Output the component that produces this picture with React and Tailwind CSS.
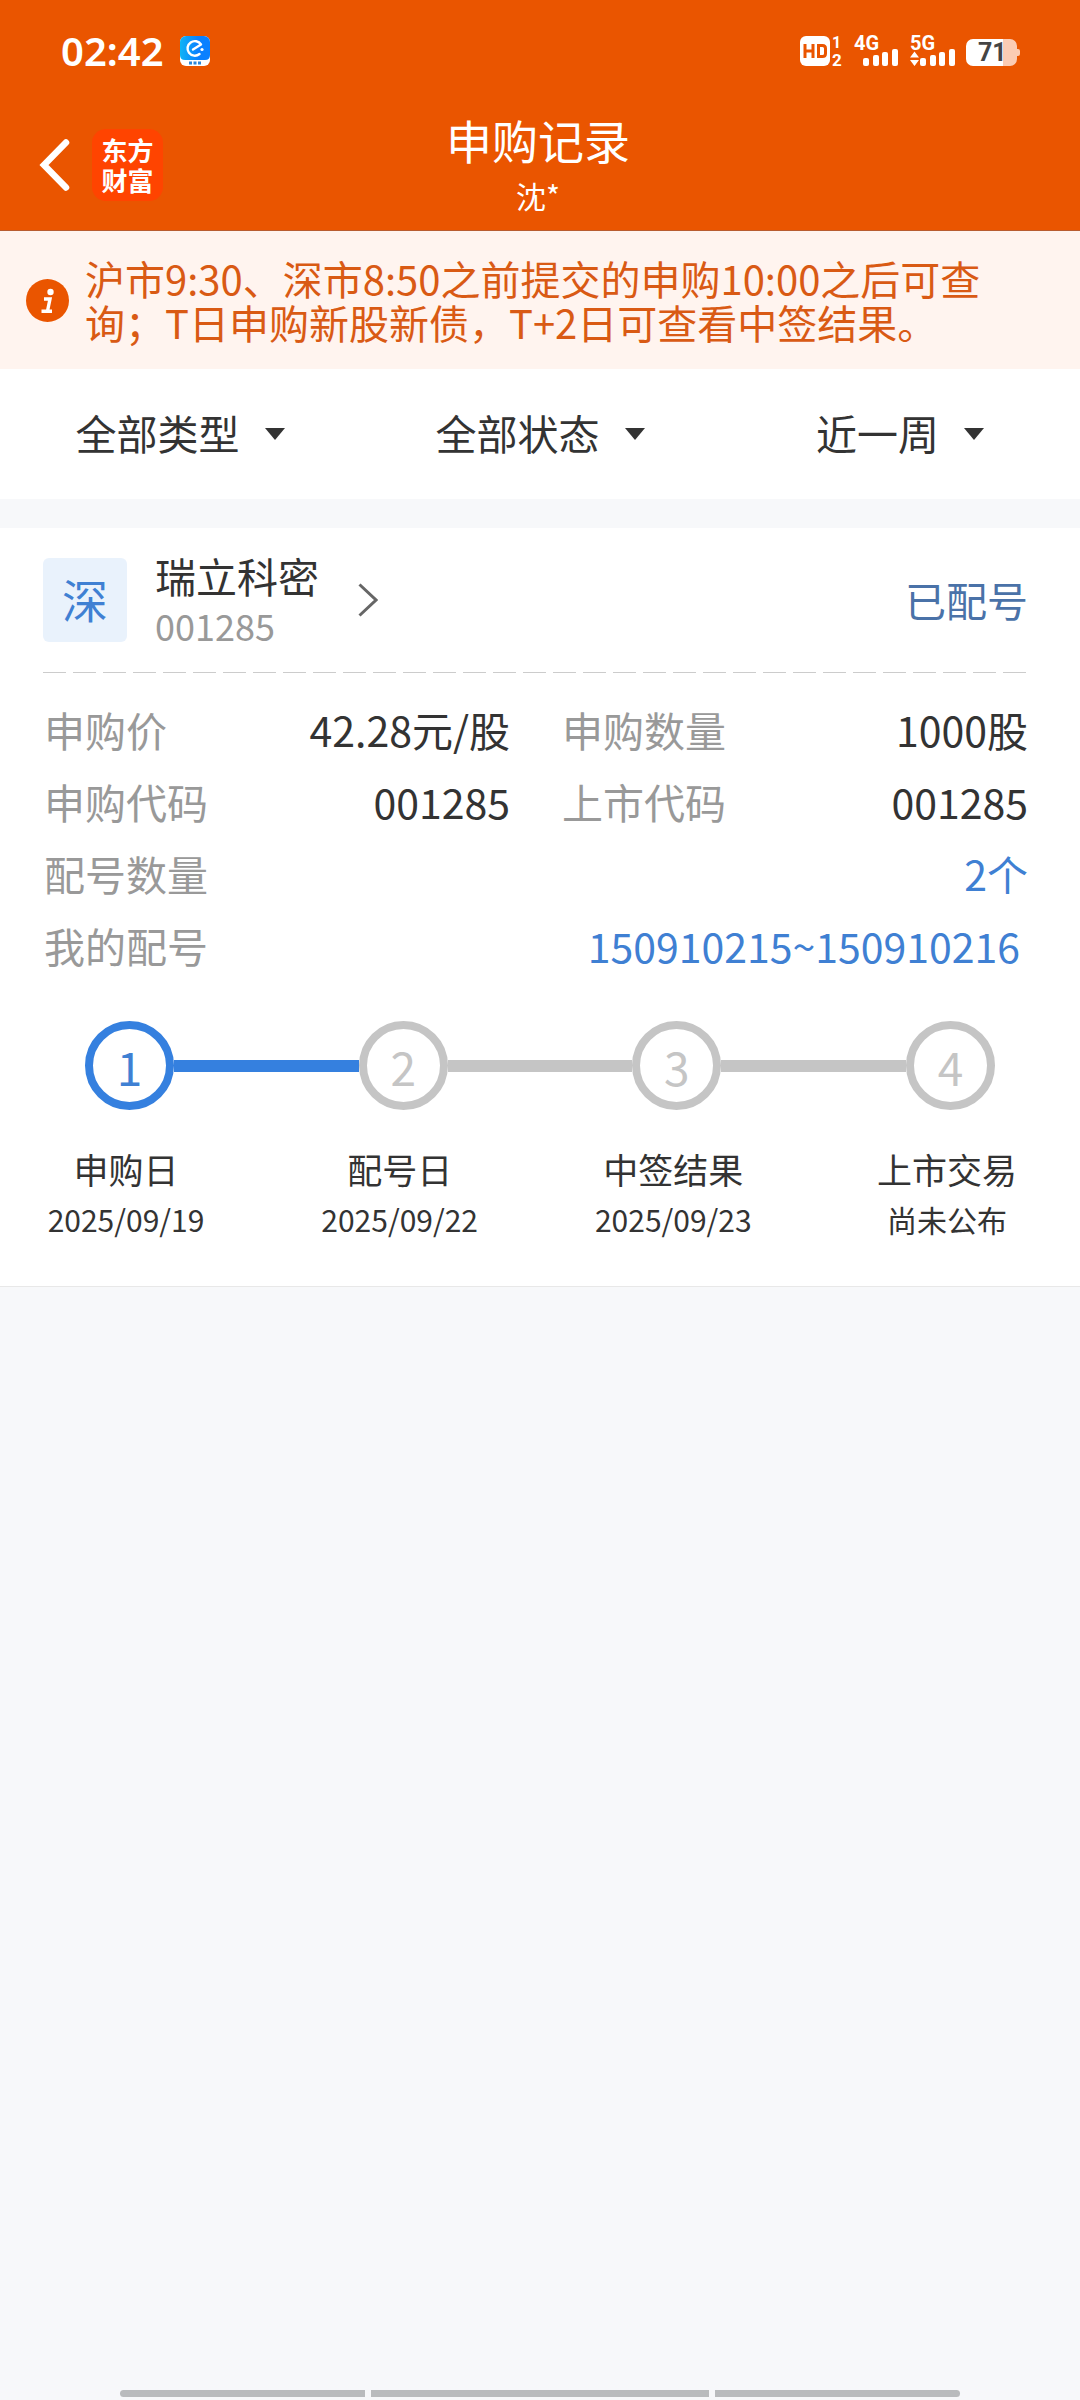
import { useState } from 'react';

const filters = [
  { id: 'type', label: '类型', options: ['全部类型', '新股', '新债'] },
  { id: 'status', label: '状态', options: ['全部状态', '已配号', '已中签'] },
  { id: 'range', label: '时间', options: ['近一周', '近一月', '近三月'] },
];

const record = {
  market: '深',
  name: '瑞立科密',
  code: '001285',
  status: '已配号',
  details: [
    { label: '申购价', value: '42.28元/股' },
    { label: '申购数量', value: '1000股' },
    { label: '申购代码', value: '001285' },
    { label: '上市代码', value: '001285' },
  ],
  count: '2个',
  numbers: '150910215~150910216',
  steps: [
    { title: '申购日', date: '2025/09/19' },
    { title: '配号日', date: '2025/09/22' },
    { title: '中签结果', date: '2025/09/23' },
    { title: '上市交易', date: '尚未公布' },
  ],
  current: 0,
};

function SignalBars() {
  return (
    <g fill="#fff">
      <rect x="0" y="22" width="6" height="8" rx="2" />
      <rect x="10" y="19" width="6" height="11" rx="2" />
      <rect x="19" y="16" width="6" height="14" rx="2" />
      <rect x="29" y="13" width="6" height="17" rx="2" />
    </g>
  );
}

function StatusBar() {
  return (
    <div className="flex h-[100px] items-center justify-between pt-[2px] pr-[60px] pl-[61px] text-white">
      <div className="flex items-center gap-4">
        <span className="font-['Noto_Sans'] text-[40px] leading-[40px] font-semibold">02:42</span>
        <svg width="30" height="30" viewBox="0 0 30 30">
          <defs>
            <linearGradient id="appBlue" x1="0" y1="0" x2="1" y2="0">
              <stop offset="0" stopColor="#0fb4f5" />
              <stop offset="0.6" stopColor="#0a80ff" />
            </linearGradient>
          </defs>
          <rect width="30" height="30" rx="6" fill="#fff" />
          <path d="M6 0h18a6 6 0 0 1 6 6v13q0 5-5 5H5q-5 0-5-5V6a6 6 0 0 1 6-6z" fill="url(#appBlue)" />
          <path d="M13 13.500L21 8.500A7.300 7.300 0 1 0 19.500 18" fill="none" stroke="#fff" strokeWidth="2.400" strokeLinecap="round" strokeLinejoin="round" />
          <circle cx="22" cy="13.500" r="1.600" fill="#fff" />
          <path d="M9 27h3M13.500 27h3M18 27h3" stroke="#2b86d8" strokeWidth="3" />
        </svg>
      </div>

      <div className="flex items-center font-['Roboto'] font-bold">
        <svg width="43" height="30" viewBox="0 0 43 30" className="overflow-visible">
          <rect width="30" height="30" rx="6" fill="#fff" />
          <path d="M5 8v14M13 8v14M5 15h8M18.500 9.500h4q3 0 3 3v5q0 3-3 3h-4z" fill="none" stroke="#ea5500" strokeWidth="3" />
          <text x="32" y="12" fontSize="16" fill="#fff">1</text>
          <text x="32" y="30" fontSize="17" fill="#fff">2</text>
        </svg>
        <svg width="45" height="30" viewBox="0 0 45 30" className="ml-[11px] overflow-visible">
          <text x="0" y="14" fontSize="20" fill="#fff">4G</text>
          <g transform="translate(9 0)">
            <SignalBars />
          </g>
        </svg>
        <svg width="46" height="30" viewBox="0 0 46 30" className="ml-[11px] overflow-visible">
          <text x="0" y="14" fontSize="20" fill="#fff">5G</text>
          <path d="M0 21.500l4.500-6 4.500 6zM0 24l4.500 6 4.500-6z" fill="#fff" />
          <g transform="translate(10 0)">
            <SignalBars />
          </g>
        </svg>
        <svg width="54" height="30" viewBox="0 0 54 30" className="ml-[10px] overflow-visible">
          <path d="M37 3h7a7 7 0 0 1 7 7v3h1a2 2 0 0 1 2 2v3a2 2 0 0 1-2 2h-1v3a7 7 0 0 1-7 7h-7z" fill="#fbccb4" />
          <path d="M7 3h30v27H7a7 7 0 0 1-7-7V10a7 7 0 0 1 7-7z" fill="#fff" />
          <text x="12" y="25" fontSize="25" fill="#444">71</text>
        </svg>
      </div>
    </div>
  );
}

function TitleBar() {
  return (
    <div className="grid h-[130px] grid-cols-[1fr_auto_1fr] items-center pr-1 text-white">
      <div className="flex items-center gap-[22px] pl-[39px]">
        <button type="button" aria-label="返回">
          <svg width="31" height="54" viewBox="0 0 31 54" fill="none" stroke="#fff" strokeWidth="6.500" strokeLinecap="round" strokeLinejoin="miter">
            <path d="M27 4.500L5 27l22 22.500" />
          </svg>
        </button>
        <div className="flex h-[72px] w-[71px] flex-col items-center justify-center rounded-[14px] bg-[#ff4400] text-[26px] leading-[30px] font-bold">
          <span>东方</span>
          <span>财富</span>
        </div>
      </div>
      <div className="text-center">
        <h1 className="text-[46px] leading-[60px]">申购记录</h1>
        <p className="text-[30px] leading-[52px]">沈*</p>
      </div>
    </div>
  );
}

function Notice() {
  return (
    <div className="flex items-center gap-4 bg-[#fff4ef] py-[25px] pr-[75px] pl-[26px]">
      <svg width="43" height="43" viewBox="0 0 43 43" className="shrink-0">
        <circle cx="21.500" cy="21.500" r="21.500" fill="#ea5500" />
        <circle cx="24.500" cy="13" r="3.200" fill="#fff" />
        <path d="M18 20h6l-2.500 12M15.500 32.200h10.500" fill="none" stroke="#fff" strokeWidth="3.400" />
      </svg>
      <p className="text-[40px] leading-[44px] text-[#d95a14]">
        沪市9:30、深市8:50之前提交的申购10:00之后可查询；T日申购新股新债，T+2日可查看中签结果。
      </p>
    </div>
  );
}

function Filters() {
  const [values, setValues] = useState({ type: '全部类型', status: '全部状态', range: '近一周' });

  return (
    <div className="grid h-[130px] grid-cols-3 bg-white text-[41px] text-[#333]">
      {filters.map((f) => (
        <label key={f.id} className="flex items-center justify-center gap-[25px]">
          <select
            aria-label={f.label}
            value={values[f.id]}
            onChange={(e) => setValues({ ...values, [f.id]: e.target.value })}
            className="field-sizing-content appearance-none bg-transparent pb-1 leading-[60px] outline-none"
          >
            {f.options.map((o) => (
              <option key={o}>{o}</option>
            ))}
          </select>
          <svg width="20" height="12" viewBox="0 0 20 12" fill="#333">
            <path d="M0 0h20L10 12z" />
          </svg>
        </label>
      ))}
    </div>
  );
}

function Steps({ steps, current }) {
  return (
    <div>
      <div className="mt-[40px] flex items-center px-[85px]">
        {steps.map((s, i) => (
          <div key={s.title} className={i > 0 ? 'flex flex-1 items-center' : 'flex items-center'}>
            {i > 0 && (
              <div className={`h-3 flex-1 ${i - 1 <= current ? 'bg-[#3580df]' : 'bg-[#c5c5c5]'}`} />
            )}
            <div
              className={`flex size-[89px] items-center justify-center rounded-full border-8 text-[46px] leading-[60px] ${
                i <= current ? 'border-[#3580df] text-[#3f80d3]' : 'border-[#c5c5c5] text-[#c5c5c5]'
              }`}
            >
              {i + 1}
            </div>
          </div>
        ))}
      </div>
      <ol className="mt-[34px] flex justify-between pr-[51px] pl-[44px] text-center leading-[50px] text-[#333]">
        {steps.map((s) => (
          <li key={s.title} className="w-[164px]">
            <p className="text-[35px]">{s.title}</p>
            <p className="text-[30px]">{s.date}</p>
          </li>
        ))}
      </ol>
    </div>
  );
}

function RecordCard() {
  return (
    <section className="mt-[29px] border-b border-[#e8e8e8] bg-white pb-[42px]">
      <div className="flex h-[144px] items-center justify-between pr-[52px] pl-[43px]">
        <a href="#detail" className="flex items-center">
          <span className="flex size-[84px] items-center justify-center rounded-md bg-[#e9f2fc] pb-1 text-[46px] leading-[60px] text-[#3f80d3]">
            {record.market}
          </span>
          <span className="ml-[28px] flex flex-col leading-[50px]">
            <span className="text-[41px] text-[#333]">{record.name}</span>
            <span className="text-[36px] text-[#999]">{record.code}</span>
          </span>
          <svg width="20" height="34" viewBox="0 0 20 34" fill="none" stroke="#666" strokeWidth="3" className="ml-[39px]">
            <path d="M1.500 1.500L18 17 1.500 32.500" />
          </svg>
        </a>
        <span className="text-[41px] text-[#4a72a8]">{record.status}</span>
      </div>

      {/* dashed divider */}
      <div className="mr-[51px] ml-[43px] h-px bg-[repeating-linear-gradient(to_right,#ccc_0_23px,transparent_23px_30px)]" />

      <dl className="grid grid-cols-2 gap-x-[52px] pt-[20px] pr-[52px] pl-[44px] text-[41px] leading-[72px]">
        {record.details.map((d) => (
          <div key={d.label} className="flex justify-between">
            <dt className="text-[#999]">{d.label}</dt>
            <dd className="text-[#333]">{d.value}</dd>
          </div>
        ))}
        <div className="col-span-2 flex justify-between">
          <dt className="text-[#999]">配号数量</dt>
          <dd className="text-[#3f80d3]">{record.count}</dd>
        </div>
        <div className="col-span-2 flex justify-between">
          <dt className="text-[#999]">我的配号</dt>
          <dd className="pr-2 text-[#3f80d3]">{record.numbers}</dd>
        </div>
      </dl>

      <Steps steps={record.steps} current={record.current} />
    </section>
  );
}

function App() {
  return (
    <div className="flex min-h-screen flex-col bg-[#f7f8fa] font-['Noto_Sans_CJK_SC',sans-serif]">
      <header className="border-b border-[#b85c30] bg-[#ea5500]">
        <StatusBar />
        <TitleBar />
      </header>
      <Notice />
      <Filters />
      <RecordCard />

      {/* system navigation handle */}
      <div className="mt-auto flex h-[10px] gap-[6px] px-[120px] pb-[3px]">
        <div className="flex-[8] rounded-l-full bg-[#b9bbbd]" />
        <div className="flex-[11] bg-[#b9bbbd]" />
        <div className="flex-[8] rounded-r-full bg-[#b9bbbd]" />
      </div>
    </div>
  );
}

export default App;
